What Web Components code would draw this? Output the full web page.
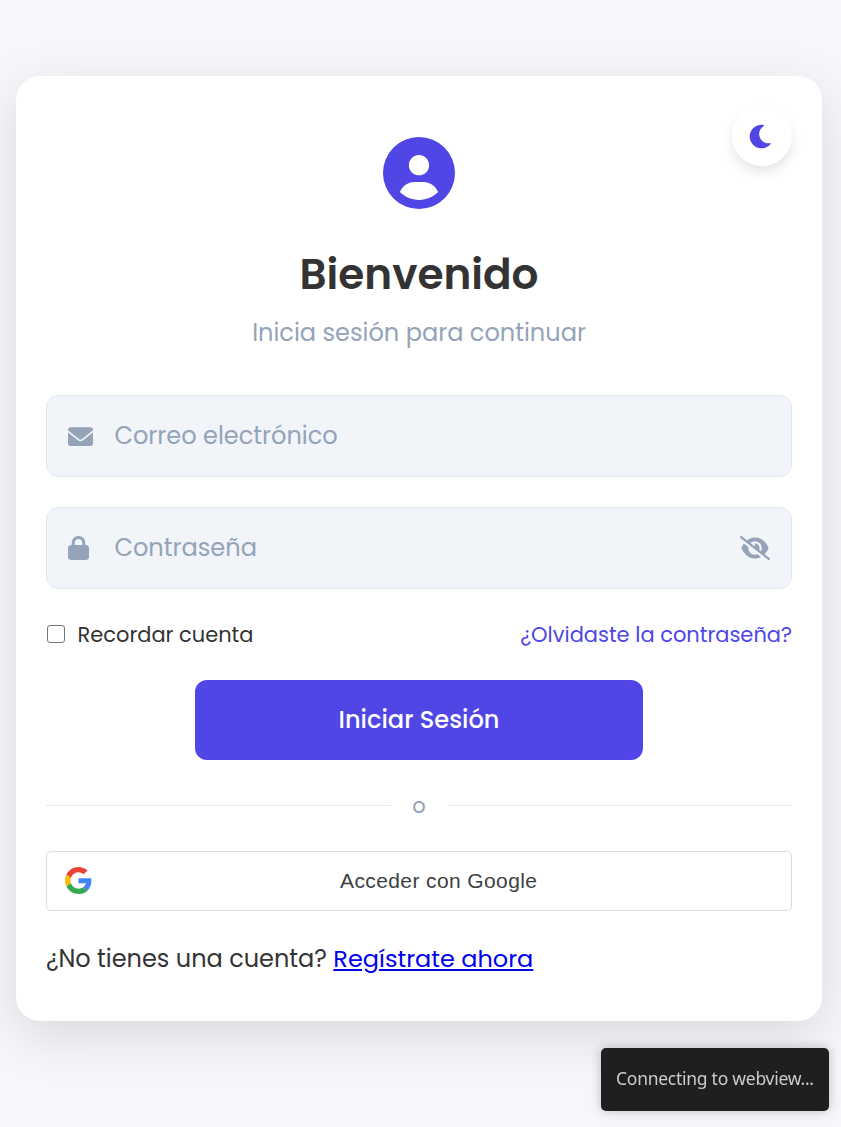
<!DOCTYPE html>
<html lang="es">
<head>
<meta charset="utf-8">
<title>Iniciar Sesión</title>
<style>
  html, body { margin: 0; height: 100%; }
  body { background: #f5f7fb; color: #333; font-family: Poppins, Inter, "Open Sans", sans-serif; overflow: hidden; }
</style>
</head>
<body>
<login-page></login-page>
<script>
const define = (name, html, setup) => {
  const template = document.createElement('template');
  template.innerHTML = html;
  customElements.define(name, class extends HTMLElement {
    connectedCallback() {
      if (this.shadowRoot) return;
      this.attachShadow({ mode: 'open' }).append(template.content.cloneNode(true));
      if (setup) setup(this, this.shadowRoot);
    }
  });
};

const ICONS = {
  user: ['0 0 512 512', '<path fill-rule="evenodd" d="M0 256a256 256 0 1 1 512 0A256 256 0 1 1 0 256zM256 128c39.77 0 72 32.24 72 72S295.8 272 256 272c-39.76 0-72-32.24-72-72S216.2 128 256 128zM256 448c-52.93 0-100.9-21.53-135.7-56.29C136.5 349.9 176.5 320 224 320h64c47.54 0 87.54 29.88 103.7 71.71C356.9 426.5 308.9 448 256 448z"/>'],
  moon: ['0 0 512 512', '<path d="M32 256c0-123.8 100.3-224 223.8-224c11.36 0 29.7 1.668 40.9 3.746c9.616 1.777 11.75 14.63 3.279 19.44C245 86.5 211.2 144.6 211.2 207.8c0 109.7 99.71 193 208.3 172.3c9.561-1.805 16.28 9.324 10.11 16.95C387.9 448.6 324.8 480 255.8 480C132.1 480 32 379.6 32 256z"/>'],
  mail: ['0 0 512 512', '<path d="M256 352c-16.53 0-33.06-5.422-47.16-16.41L0 173.2V400C0 426.5 21.49 448 48 448h416c26.51 0 48-21.49 48-48V173.2l-208.8 162.5C289.1 346.6 272.5 352 256 352zM16.29 145.3l212.2 165.1c16.19 12.6 38.87 12.6 55.06 0l212.2-165.1C505.1 137.3 512 125 512 112C512 85.49 490.5 64 464 64h-416C21.49 64 0 85.49 0 112C0 125 6.01 137.3 16.29 145.3z"/>'],
  lock: ['0 0 448 512', '<path d="M144 144v48H304V144c0-44.2-35.8-80-80-80s-80 35.8-80 80zM80 192V144C80 64.5 144.5 0 224 0s144 64.5 144 144v48h16c35.3 0 64 28.7 64 64V448c0 35.3-28.7 64-64 64H64c-35.3 0-64-28.7-64-64V256c0-35.3 28.7-64 64-64H80z"/>'],
  eye: ['0 0 640 512', '<path d="M150.7 92.77C195 58.27 251.8 32 320 32C400.8 32 465.5 68.84 512.6 112.6C559.4 156 590.7 207.1 605.5 243.7C608.8 251.6 608.8 260.4 605.5 268.3C592.1 300.6 565.2 346.1 525.6 386.7L630.8 469.1C641.2 477.3 643.1 492.4 634.9 502.8C626.7 513.2 611.6 515.1 601.2 506.9L9.196 42.89C-1.236 34.71-3.065 19.63 5.112 9.196C13.29-1.236 28.37-3.065 38.81 5.112L150.7 92.77zM223.1 149.5L313.4 220.3C317.6 211.8 320 202.2 320 191.1C320 180.5 316.1 169.7 311.6 160.4C314.4 160.1 317.2 159.1 320 159.1C373 159.1 416 202.1 416 255.1C416 269.7 413.1 282.7 407.1 294.5L446.6 324.7C457.7 304.3 464 280.9 464 255.1C464 176.5 399.5 111.1 320 111.1C282.7 111.1 248.6 126.2 223.1 149.5zM320 480C239.2 480 174.5 443.2 127.4 399.4C80.62 355.1 49.34 304 34.46 268.3C31.18 260.4 31.18 251.6 34.46 243.7C44 220.8 60.29 191.2 83.09 161.5L177.4 235.8C176.5 242.4 176 249.1 176 255.1C176 335.5 240.5 400 320 400C338.7 400 356.6 396.4 373 389.9L446.2 447.5C409.9 467.1 367.8 480 320 480z"/>'],
  google: ['0 0 48 48', '<path fill="#EA4335" d="M24 9.5c3.54 0 6.71 1.22 9.21 3.6l6.85-6.85C35.9 2.38 30.47 0 24 0 14.62 0 6.51 5.38 2.56 13.22l7.98 6.19C12.43 13.72 17.74 9.5 24 9.5z"/><path fill="#4285F4" d="M46.98 24.55c0-1.57-.15-3.09-.38-4.55H24v9.02h12.94c-.58 2.96-2.26 5.48-4.78 7.18l7.73 6c4.51-4.18 7.09-10.36 7.09-17.65z"/><path fill="#FBBC05" d="M10.53 28.59c-.48-1.45-.76-2.99-.76-4.59s.27-3.14.76-4.59l-7.98-6.19C.92 16.46 0 20.12 0 24c0 3.88.92 7.54 2.56 10.78l7.97-6.19z"/><path fill="#34A853" d="M24 48c6.48 0 11.93-2.13 15.89-5.81l-7.73-6c-2.15 1.45-4.92 2.3-8.16 2.3-6.26 0-11.57-4.22-13.47-9.91l-7.98 6.19C6.51 42.62 14.62 48 24 48z"/>']
};

define('ui-icon', `<style>
  :host { display: block; flex: none; }
  svg { display: block; width: 100%; height: 100%; fill: currentColor; overflow: visible; }
</style><svg aria-hidden="true"></svg>`, (host, root) => {
  const [box, art] = ICONS[host.getAttribute('name')];
  const svg = root.querySelector('svg');
  svg.setAttribute('viewBox', box);
  svg.innerHTML = art;
});

/* One line of text that spans the given width: by its size, or by its tracking when "track" is set. */
define('ui-text', `<style>
  :host { display: inline-block; white-space: nowrap; }
  span { display: inline-block; text-decoration: inherit; }
</style><span><slot></slot></span>`, (host, root) => {
  const span = root.querySelector('span');
  const width = parseFloat(host.getAttribute('width'));
  const natural = span.getBoundingClientRect().width;
  if (host.hasAttribute('track')) {
    const space = (width - natural) / (host.textContent.length - 1);
    span.style.letterSpacing = space.toFixed(3) + 'px';
    span.style.marginRight = (-space).toFixed(3) + 'px';
  } else {
    span.style.fontSize = (parseFloat(getComputedStyle(span).fontSize) * width / natural).toFixed(3) + 'px';
  }
});

define('login-field', `<style>
  :host { display: flex; align-items: center; box-sizing: border-box; height: 82px; padding: 0 21px;
    border: 1px solid #e2e8f0; border-radius: 12px; background: #f1f4f9; color: #94a3b8; font-size: 24px; line-height: 36px; }
  .lead { width: 46.4px; flex: none; }
  .text { flex: 1; }
</style><div class="lead"><slot name="icon"></slot></div><div class="text"><slot></slot></div><slot name="action"></slot>`);

define('theme-toggle', `<style>
  :host { position: absolute; top: 30px; right: 30px; width: 60px; height: 60px; display: flex; align-items: center; justify-content: center;
    border-radius: 50%; background: #fff; color: #4f46e5; box-shadow: 0 6px 12px rgba(0,0,0,.1); }
  ui-icon { width: 27px; height: 27px; margin: 1px 1px 0 0; }
</style><ui-icon name="moon"></ui-icon>`);

define('primary-button', `<style>
  :host { display: flex; align-items: center; justify-content: center; box-sizing: border-box; width: 448px; height: 80px; border-radius: 12px;
    background: #4f46e5; color: #fff; font-size: 24px; font-weight: 500; line-height: 36px; }
</style><slot></slot>`);

define('text-divider', `<style>
  :host { display: flex; align-items: flex-start; color: #94a3b8; font-size: 21px; line-height: 32px; height: 32px; }
  i { flex: 1; height: 1px; margin-top: 15px; background: #e5e7eb; }
  b { width: 57px; text-align: center; font-weight: 400; }
</style><i></i><b><slot></slot></b><i></i>`);

define('google-button', `<style>
  :host { display: grid; grid-template-columns: 67px 1fr 28px; align-items: center; box-sizing: border-box; height: 60px; padding: 0 17px;
    border: 1px solid #dadce0; border-radius: 5px; background: #fff; color: #3c4043; font: 21px "Liberation Sans", Arial, sans-serif; text-align: center; }
  ui-icon { width: 27px; height: 27px; margin: 0 0 1px 1px; }
</style><ui-icon name="google"></ui-icon><div><slot></slot></div>`);

define('status-toast', `<style>
  :host { position: fixed; right: 12px; bottom: 16px; box-sizing: border-box; width: 228px; height: 63px; padding-bottom: 3px; display: flex; align-items: center; justify-content: center;
    border-radius: 5px; background: #1f1f1f; color: #ccc; font: 17.5px "Noto Sans", "Open Sans", sans-serif; box-shadow: 0 0 12px rgba(0,0,0,.24); }
</style><slot></slot>`);

define('login-card', `<style>
  :host { display: flex; flex-direction: column; position: relative; box-sizing: border-box; width: 806px; height: 945px; padding: 61px 30px 0;
    border-radius: 24px; background: #fff; box-shadow: 0 15px 52px rgba(0,0,0,.12); }
  .avatar { width: 72px; height: 72px; align-self: center; color: #4f46e5; }
  h1 { margin: 34px 0 0; font-size: 42px; font-weight: 600; line-height: 64px; height: 64px; text-align: center; }
  .sub { margin-top: 8px; color: #94a3b8; font-size: 24px; line-height: 36px; height: 36px; text-align: center; }
  .fields { display: grid; gap: 30px; margin-top: 44px; }
  .mail { width: 25px; height: 25px; }
  .lock { width: 21px; height: 24px; margin-left: .3px; }
  .eye { width: 30px; height: 24px; }
  .row { display: flex; align-items: center; height: 32px; margin-top: 30px; font-size: 21px; line-height: 32px; }
  .check { box-sizing: border-box; width: 18px; height: 18px; margin: 0 12.5px 2px 1px; border: 1.5px solid #767676; border-radius: 3px; }
  .forgot { margin-left: auto; color: #4f46e5; }
  primary-button { align-self: center; margin-top: 29px; }
  text-divider { margin-top: 30px; }
  google-button { margin-top: 29px; }
  .join { display: flex; gap: 6.5px; margin-top: 30px; font-size: 24px; line-height: 36px; }
  a { color: #00e; text-decoration: underline; }
</style>
<theme-toggle></theme-toggle>
<ui-icon class="avatar" name="user"></ui-icon>
<h1><ui-text width="239">Bienvenido</ui-text></h1>
<div class="sub"><ui-text width="334">Inicia sesión para continuar</ui-text></div>
<div class="fields">
  <login-field><ui-icon slot="icon" class="mail" name="mail"></ui-icon><ui-text width="223.4">Correo electrónico</ui-text></login-field>
  <login-field><ui-icon slot="icon" class="lock" name="lock"></ui-icon><ui-text width="142.6">Contraseña</ui-text><ui-icon slot="action" class="eye" name="eye"></ui-icon></login-field>
</div>
<div class="row"><span class="check"></span><ui-text width="176">Recordar cuenta</ui-text><ui-text class="forgot" width="272">¿Olvidaste la contraseña?</ui-text></div>
<primary-button><ui-text width="161">Iniciar Sesión</ui-text></primary-button>
<text-divider>o</text-divider>
<google-button><ui-text track width="197">Acceder con Google</ui-text></google-button>
<div class="join"><ui-text width="281">¿No tienes una cuenta?</ui-text><a><ui-text width="200" style="text-decoration:inherit">Regístrate ahora</ui-text></a></div>`);

define('login-page', `<style>
  :host { display: block; box-sizing: border-box; height: 100vh; padding: 76px 0 0 16px; }
</style>
<login-card></login-card>
<status-toast><ui-text track width="198">Connecting to webview...</ui-text></status-toast>`);
</script>
</body>
</html>
